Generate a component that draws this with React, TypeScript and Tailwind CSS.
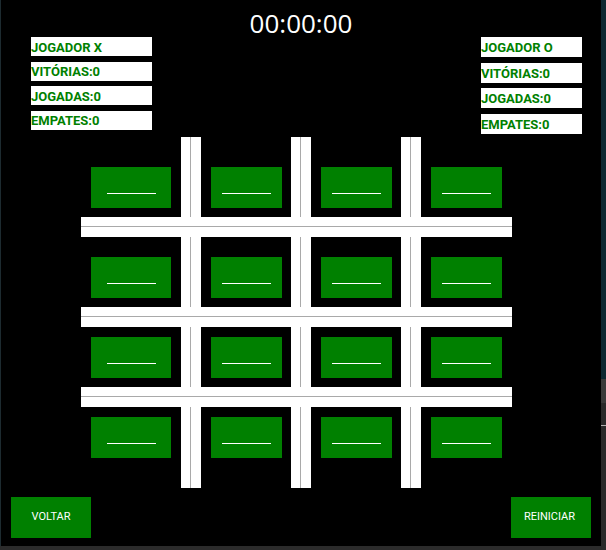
const colStart = ['col-start-1', 'col-start-3', 'col-start-5', 'col-start-7'];
const rowStart = ['row-start-1', 'row-start-3', 'row-start-5', 'row-start-7'];
const rowTop = ['mt-[30px]', 'mt-[20px]', 'mt-[10px]', 'mt-[10px]'];
const vBars = ['col-start-2', 'col-start-4', 'col-start-6'];
const hBars = ['row-start-2', 'row-start-4', 'row-start-6'];

function StatBox({ text, h }: { text: string; h: string }) {
  return (
    <div className={`bg-white flex items-center pt-[1px] ${h}`}>
      <span className="font-['Roboto',sans-serif] font-bold text-[13px] leading-none text-[#008000]">{text}</span>
    </div>
  );
}

function Cell({ col, row }: { col: number; row: number }) {
  return (
    <div
      className={`${colStart[col]} ${rowStart[row]} ${rowTop[row]} ml-[10px] self-start h-[41px] bg-[#008000] flex flex-col items-center pt-[26px] ${
        col === 0 ? 'w-[80px]' : 'w-[71px]'
      }`}
    >
      <div className="h-px w-[49px] bg-white" />
    </div>
  );
}

export default function App() {
  const labels = ['VITÓRIAS:0', 'JOGADAS:0', 'EMPATES:0'];

  return (
    <div className="w-[606px] h-[550px] flex flex-col bg-[#262626] overflow-hidden">
      <div className="flex h-[546px]">
        <div className="w-px bg-[#1d2b30]" />
        <div className="w-[600px] bg-black flex flex-col">
          {/* timer */}
          <div className="h-[37px] flex items-center justify-center pt-[9px]">
            <span className="font-['Open_Sans',sans-serif] text-[26px] leading-none text-white">00:00:00</span>
          </div>

          {/* placar */}
          <div className="h-[100px] flex justify-between pl-[30px] pr-[19px]">
            <div className="w-[121px] flex flex-col gap-[5.5px]">
              <StatBox text="JOGADOR X" h="h-[19px]" />
              {labels.map((l) => (
                <StatBox key={l} text={l} h="h-[19px]" />
              ))}
            </div>
            <div className="w-[101px] flex flex-col gap-[5.7px]">
              <StatBox text="JOGADOR O" h="h-[20px]" />
              {labels.map((l) => (
                <StatBox key={l} text={l} h="h-[20px]" />
              ))}
            </div>
          </div>

          {/* tabuleiro */}
          <div className="ml-[80px] w-[431px] grid grid-cols-[100px_20px_90px_20px_90px_20px_91px] grid-rows-[80px_20px_70px_20px_60px_20px_81px]">
            {vBars.map((c) => (
              <div key={c} className={`${c} row-[1/8] bg-white pl-[9px]`}>
                <div className="w-px h-full bg-[#a9a9a9]" />
              </div>
            ))}
            {hBars.map((r) => (
              <div key={r} className={`${r} col-[1/8] z-10 bg-white pt-[9px]`}>
                <div className="h-px w-full bg-[#a9a9a9]" />
              </div>
            ))}
            {[0, 1, 2, 3].map((row) =>
              [0, 1, 2, 3].map((col) => <Cell key={`${row}-${col}`} col={col} row={row} />)
            )}
          </div>

          {/* botões */}
          <div className="mt-[9px] flex justify-between pl-[10px] pr-[10px]">
            <button className="w-[80px] h-[41px] bg-[#008000] text-white font-['Roboto',sans-serif] text-[11px] flex items-center justify-center">
              VOLTAR
            </button>
            <button className="w-[80px] h-[41px] bg-[#008000] text-white font-['Roboto',sans-serif] text-[11px] flex items-center justify-center pr-[3px]">
              REINICIAR
            </button>
          </div>
        </div>
        <div className="w-[5px] flex flex-col">
          <div className="h-[379px] bg-[#0d2831]" />
          <div className="h-[24px] bg-[#3a3a3a]" />
          <div className="h-[22px] bg-[#2a2a2a]" />
          <div className="h-px bg-[#b0b0b0]" />
          <div className="flex-1 bg-[#2a2a2a]" />
        </div>
      </div>
      <div className="h-[4px] bg-[#2b2b2b]" />
    </div>
  );
}
